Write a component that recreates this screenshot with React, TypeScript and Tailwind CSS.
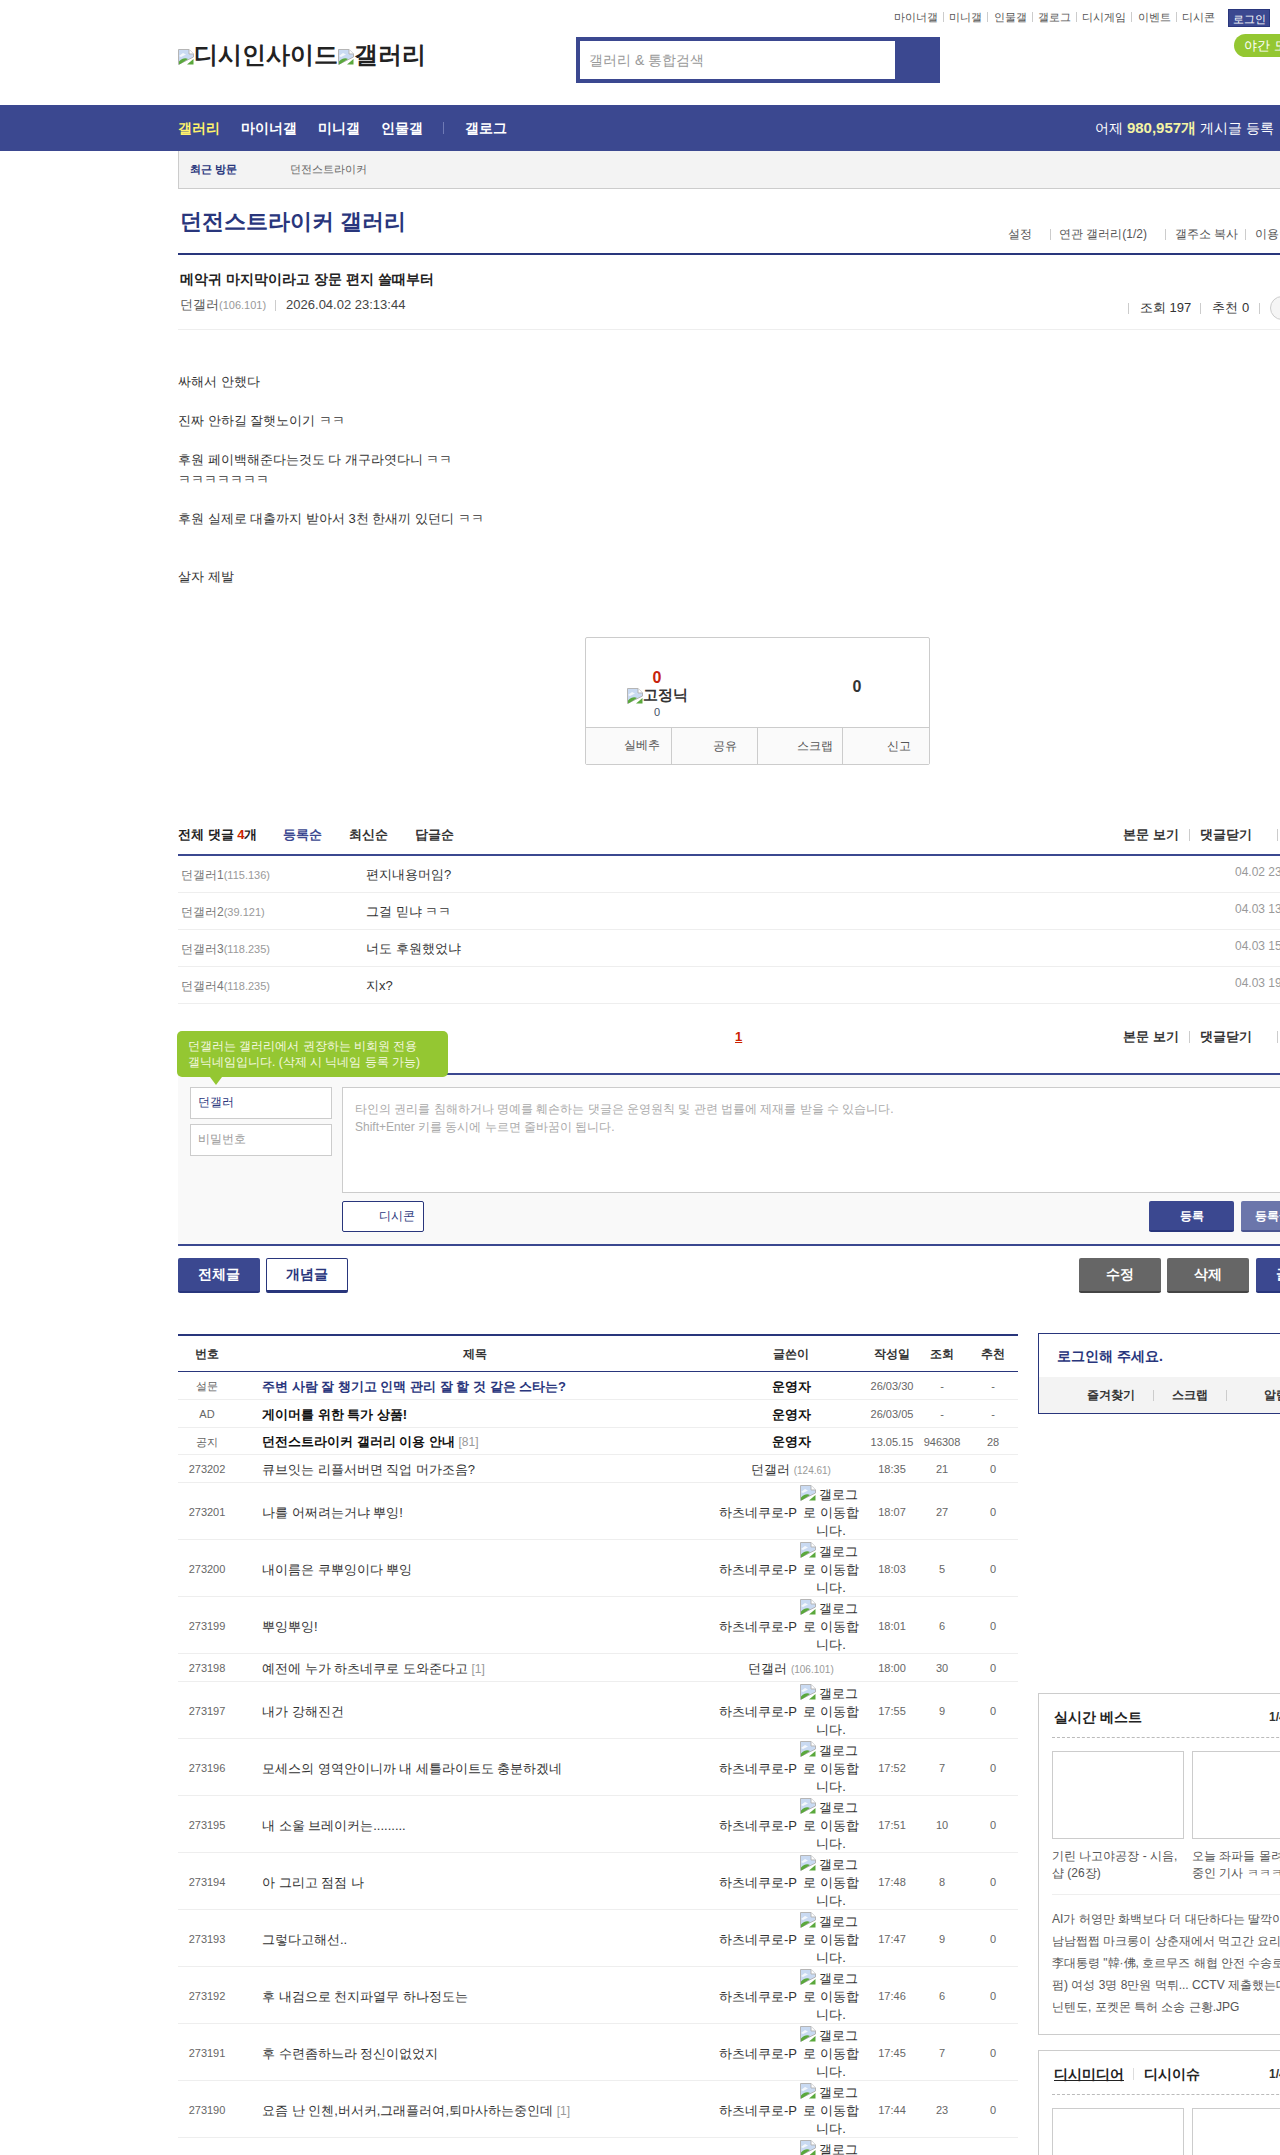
import React from "react";

function Broken() {
  return (
    <svg width="16" height="16" viewBox="0 0 16 16" className="inline-block align-[-2px] shrink-0">
      <path d="M0.5 0.5H11L15.5 5V8L0.5 15.5Z" fill="#c9daf2" stroke="#b5b5b5" />
      <path d="M11 0.5V5H15.5" fill="#fff" stroke="#b5b5b5" />
      <path d="M1 15V12.5C4 9.5 7 8.5 10 10L1.5 15.5Z" fill="#5aa83c" />
      <path d="M15.5 10V15.5H9Z" fill="#5aa83c" />
      <path d="M1 7L5 4L8 5.5L3 8Z" fill="#fff" opacity="0.8" />
    </svg>
  );
}

function Sep({ c = "bg-[#cccccc]", h = "h-[11px]" }: { c?: string; h?: string }) {
  return <i className={`block w-px ${h} ${c}`} />;
}

const topLinks = ["마이너갤", "미니갤", "인물갤", "갤로그", "디시게임", "이벤트", "디시콘"];

type Row = { n: string; t: string; r?: string; w?: string; ip?: string; d: string; v: string };
const rows: Row[] = [
  { n: "273202", t: "큐브잇는 리플서버면 직업 머가조음?", w: "던갤러", ip: "(124.61)", d: "18:35", v: "21" },
  { n: "273201", t: "나를 어쩌려는거냐 뿌잉!", d: "18:07", v: "27" },
  { n: "273200", t: "내이름은 쿠뿌잉이다 뿌잉", d: "18:03", v: "5" },
  { n: "273199", t: "뿌잉뿌잉!", d: "18:01", v: "6" },
  { n: "273198", t: "예전에 누가 하츠네쿠로 도와준다고", r: "[1]", w: "던갤러", ip: "(106.101)", d: "18:00", v: "30" },
  { n: "273197", t: "내가 강해진건", d: "17:55", v: "9" },
  { n: "273196", t: "모세스의 영역안이니까 내 세틀라이트도 충분하겠네", d: "17:52", v: "7" },
  { n: "273195", t: "내 소울 브레이커는.........", d: "17:51", v: "10" },
  { n: "273194", t: "아 그리고 점점 나", d: "17:48", v: "8" },
  { n: "273193", t: "그렇다고해선..", d: "17:47", v: "9" },
  { n: "273192", t: "후 내검으로 천지파열무 하나정도는", d: "17:46", v: "6" },
  { n: "273191", t: "후 수련좀하느라 정신이없었지", d: "17:45", v: "7" },
  { n: "273190", t: "요즘 난 인첸,버서커,그래플러여,퇴마사하는중인데", r: "[1]", d: "17:44", v: "23" },
];

const grid = "grid grid-cols-[58px_478px_154px_48px_52px_50px] items-center text-center border-b";

function Gallog() {
  return (
    <div className="inline-flex items-center justify-center text-[13px] text-[#333333]">
      <span className="whitespace-nowrap">하츠네쿠로-P</span>
      <span className="w-[64px] ml-[2px] leading-[18px] text-center">
        <Broken /> 갤로그<span className="inline-block w-[4px]" />로 이동합니다.
      </span>
    </div>
  );
}

function Notice({ n, t, c, r, d, v, rec, h }: { n: string; t: string; c: string; r?: string; d: string; v: string; rec: string; h: string }) {
  return (
    <div className={`${grid} ${h} pt-[2px] border-[#eeeeee] text-[11px] text-[#666666]`}>
      <div>{n}</div>
      <div className={`text-left pl-[26px] text-[13px] font-bold ${c}`}>
        {t} {r && <span className="text-[12px] font-normal text-[#999999]">{r}</span>}
      </div>
      <div className="text-[13px] font-bold text-[#111111]">운영자</div>
      <div>{d}</div>
      <div>{v}</div>
      <div>{rec}</div>
    </div>
  );
}

function BoxHead({ children }: { children: React.ReactNode }) {
  return (
    <div className="flex items-center h-[44px] pt-[3px] border-b border-dashed border-[#bbbbbb] pl-[1px]">
      {children}
      <span className="absolute left-[230px] text-[12px] font-bold text-[#333333]">1/4</span>
    </div>
  );
}

export default function App() {
  return (
    <div className="relative w-[1280px] h-[2155px] overflow-hidden bg-white text-[#333333] font-['Liberation_Sans',sans-serif]">
      {/* header */}
      <header className="h-[105px] pl-[178px]">
        <div className="w-[1092px] h-[27px] pt-[9px] flex justify-end items-start text-[11px] text-[#555555]">
          <div className="flex items-center h-[16px]">
            {topLinks.map((l, i) => (
              <React.Fragment key={l}>
                {i > 0 && <span className="mx-[5.2px]"><Sep h="h-[10px]" /></span>}
                <span>{l}</span>
              </React.Fragment>
            ))}
          </div>
          <span className="ml-[13px] w-[42px] h-[18px] leading-[18px] text-center bg-[#3b4890] border border-[#29367c] text-white">로그인</span>
        </div>
        <div className="flex items-start w-[1200px]">
          <div className="w-[398px] mt-[12px] text-[24px] leading-[32px] font-bold text-[#222222] whitespace-nowrap">
            <Broken />디시인사이드<Broken />갤러리
          </div>
          <div className="mt-[10px] w-[364px] h-[46px] bg-[#3b4890] pt-[4px] pl-[4px]">
            <div className="w-[315px] h-[38px] bg-white pl-[9px] leading-[38px] text-[14px] font-medium text-[#999999]">갤러리 &amp; 통합검색</div>
          </div>
          <div className="mt-[7px] ml-[294px] w-[90px] h-[23px] rounded-l-[12px] bg-[#94c732] pl-[10px] text-[13px] leading-[23px] text-white whitespace-nowrap">야간 모드</div>
        </div>
      </header>

      {/* nav */}
      <nav className="relative h-[46px] bg-[#3b4890] pl-[178px] flex items-center text-[14px] font-bold text-white whitespace-nowrap">
        <span className="text-[#fff36b]">갤러리</span>
        <span className="ml-[21px]">마이너갤</span>
        <span className="ml-[21px]">미니갤</span>
        <span className="ml-[21px]">인물갤</span>
        <span className="ml-[20px]"><Sep c="bg-[#6f7ab5]" h="h-[12px]" /></span>
        <span className="ml-[21px]">갤로그</span>
        <span className="absolute left-[1095px] font-normal">
          어제 <b className="text-[15px] text-[#f4f4a4]">980,957개</b> 게시글 등록
        </span>
      </nav>

      <div className="ml-[178px] w-[1160px]">
        {/* recent */}
        <div className="h-[38px] flex items-center bg-[#f3f3f3] border-l border-b border-[#cccccc] text-[11px]">
          <b className="ml-[11px] text-[#29367c]">최근 방문</b>
          <span className="ml-[53px] text-[#666666]">던전스트라이커</span>
        </div>

        {/* title */}
        <div className="h-[64px] flex items-start">
          <h1 className="w-[830px] pl-[2px] mt-[16px] text-[22px] leading-[34px] font-bold text-[#29367c]">던전스트라이커 갤러리</h1>
          <div className="mt-[37px] flex items-center text-[12px] leading-[16px] text-[#555555] whitespace-nowrap">
            <span>설정</span>
            <span className="ml-[18px]"><Sep /></span>
            <span className="ml-[8px]">연관 갤러리(1/2)</span>
            <span className="ml-[18px]"><Sep /></span>
            <span className="ml-[9px]">갤주소 복사</span>
            <span className="ml-[7px]"><Sep /></span>
            <span className="ml-[9px]">이용안내</span>
          </div>
        </div>

        {/* post head */}
        <div className="h-[77px] border-t-2 border-t-[#29367c] border-b border-b-[#eeeeee] pl-[2px]">
          <div className="mt-[14px] text-[14px] leading-[20px] font-bold text-[#222222]">메악귀 마지막이라고 장문 편지 쓸때부터</div>
          <div className="mt-[7px] relative flex items-center text-[13px] leading-[18px] whitespace-nowrap">
            <span className="text-[#555555]">던갤러</span>
            <span className="text-[11px] text-[#999999]">(106.101)</span>
            <span className="ml-[9px]"><Sep c="bg-[#cccccc]" /></span>
            <span className="ml-[10px] text-[#444444]">2026.04.02 23:13:44</span>
            <div className="absolute left-[948px] top-0 flex items-center">
              <Sep />
              <span className="ml-[11px]">조회 197</span>
              <span className="ml-[9px]"><Sep /></span>
              <span className="ml-[11px]">추천 0</span>
              <span className="ml-[10px]"><Sep /></span>
              <span className="ml-[10px] w-[24px] h-[24px] rounded-full border border-[#cccccc] bg-[#f5f5f5]" />
            </div>
          </div>
        </div>

        {/* body */}
        <div className="mt-[42px] h-[215px] text-[13px] leading-[19.5px] text-[#333333]">
          싸해서 안했다<br /><br />
          진짜 안하길 잘햇노이기 ㅋㅋ<br /><br />
          후원 페이백해준다는것도 다 개구라엿다니 ㅋㅋ<br />
          ㅋㅋㅋㅋㅋㅋㅋ<br /><br />
          후원 실제로 대출까지 받아서 3천 한새끼 있던디 ㅋㅋ<br /><br /><br />
          살자 제발
        </div>

        {/* recommend */}
        <div className="ml-[407px] mt-[50px] w-[345px] h-[128px] border border-[#cccccc] rounded-[2px] flex flex-col">
          <div className="h-[90px] shrink-0 flex border-b border-[#cccccc]">
            <div className="w-[142px] pt-[31px] flex flex-col items-center">
              <b className="text-[16px] leading-[18px] text-[#c7220b]">0</b>
              <b className="h-[17px] flex items-center text-[15px] text-[#333333] whitespace-nowrap"><Broken />고정닉</b>
              <span className="mt-[2px] text-[11px] leading-[12px] text-[#445066]">0</span>
            </div>
            <div className="ml-[99px] w-[60px] pt-[37px] text-center">
              <b className="text-[16px] leading-[20px] text-[#333333]">0</b>
            </div>
          </div>
          <div className="flex-1 min-h-0 overflow-hidden grid grid-cols-4 bg-[#fafafa] text-[12px] leading-[37px] text-right text-[#555555]">
            <div className="pr-[11px] border-r border-[#cccccc] leading-[35px]">실베추</div>
            <div className="pr-[20px] border-r border-[#cccccc]">공유</div>
            <div className="pr-[9px] border-r border-[#cccccc]">스크랩</div>
            <div className="pr-[18px]">신고</div>
          </div>
        </div>

        {/* comments */}
        <div className="mt-[60px] h-[29px] flex items-start text-[13px] leading-[20px] font-bold whitespace-nowrap">
          <span className="w-[105px] text-[#222222]">전체 댓글 <span className="text-[#cc2200]">4</span>개</span>
          <span className="w-[66px] text-[#3b4890]">등록순</span>
          <span className="w-[66px]">최신순</span>
          <span className="w-[708px]">답글순</span>
          <span>본문 보기</span>
          <span className="ml-[10px] mt-[4px]"><Sep h="h-[12px]" /></span>
          <span className="ml-[10px]">댓글닫기</span>
          <span className="ml-[25px] mt-[4px]"><Sep h="h-[12px]" /></span>
        </div>
        <div className="border-t-2 border-[#3b4890]">
          {[
            ["던갤러1", "(115.136)", "편지내용머임?", "04.02 23:41:09"],
            ["던갤러2", "(39.121)", "그걸 믿냐 ㅋㅋ", "04.03 13:22:10"],
            ["던갤러3", "(118.235)", "너도 후원했었냐", "04.03 15:02:33"],
            ["던갤러4", "(118.235)", "지x?", "04.03 19:10:51"],
          ].map(([a, b, c, d]) => (
            <div key={a} className="h-[37px] pt-[2px] flex items-center border-b border-[#eeeeee] whitespace-nowrap">
              <span className="w-[188px] pl-[3px] text-[12px] text-[#777777]">
                {a}<span className="text-[11px] text-[#999999]">{b}</span>
              </span>
              <span className="w-[869px] text-[13px] text-[#333333]">{c}</span>
              <span className="mt-[-6px] text-[12px] text-[#999999]">{d}</span>
            </div>
          ))}
        </div>

        {/* pagination + tooltip */}
        <div className="relative h-[69px] pt-[23px] text-[13px] leading-[20px] font-bold whitespace-nowrap">
          <div className="flex items-start">
            <span className="ml-[557px] w-[388px] text-[#cc2200] underline">1</span>
            <span>본문 보기</span>
            <span className="ml-[10px] mt-[4px]"><Sep h="h-[12px]" /></span>
            <span className="ml-[10px]">댓글닫기</span>
            <span className="ml-[25px] mt-[4px]"><Sep h="h-[12px]" /></span>
          </div>
          <div className="absolute z-10 left-[-1px] top-[27px] w-[271px] h-[46px] rounded-[5px] bg-[#94c732] pl-[11px] pt-[7px] text-[12px] leading-[16px] font-normal text-[#f4f8e0]">
            던갤러는 갤러리에서 권장하는 비회원 전용<br />
            갤닉네임입니다. (삭제 시 닉네임 등록 가능)
            <i className="absolute left-[33px] top-[46px] w-0 h-0 border-x-[6px] border-x-transparent border-t-[8px] border-t-[#94c732]" />
          </div>
        </div>

        {/* write */}
        <div className="h-[173px] flex bg-[#f9f9f9] border-y-2 border-[#3b4890] pl-[12px] pr-[12px] pt-[12px]">
          <div className="w-[142px]">
            <div className="h-[32px] pl-[7px] leading-[28px] bg-white border border-[#cccccc] text-[12px] text-[#29367c]">던갤러</div>
            <div className="mt-[5px] h-[32px] pl-[7px] leading-[29px] bg-white border border-[#cccccc] text-[12px] text-[#999999]">비밀번호</div>
          </div>
          <div className="ml-[10px] flex-1">
            <div className="h-[106px] bg-white border border-[#cccccc] px-[12px] pt-[12px] text-[12px] leading-[18px] text-[#aaaaaa]">
              타인의 권리를 침해하거나 명예를 훼손하는 댓글은 운영원칙 및 관련 법률에 제재를 받을 수 있습니다.<br />
              Shift+Enter 키를 동시에 누르면 줄바꿈이 됩니다.
            </div>
            <div className="mt-[8px] flex items-start">
              <div className="w-[82px] h-[31px] bg-white border border-[#29367c] rounded-[2px] pl-[36px] leading-[29px] text-[12px] text-[#29367c]">디시콘</div>
              <div className="ml-[725px] w-[85px] h-[31px] rounded-[2px] bg-[#3b4890] border-b-2 border-[#29367c] text-center leading-[30px] text-[12px] font-bold text-white">등록</div>
              <div className="ml-[7px] w-[85px] h-[31px] rounded-[2px] bg-[#6b76ab] border-b-2 border-[#4a5590] pl-[14px] leading-[30px] text-[12px] font-bold text-white">등록+추천</div>
            </div>
          </div>
        </div>

        {/* action buttons */}
        <div className="mt-[12px] h-[35px] flex text-[14px] font-bold text-center leading-[32px] whitespace-nowrap">
          <div className="w-[82px] rounded-[2px] bg-[#3b4890] border-b-2 border-[#29367c] text-white">전체글</div>
          <div className="ml-[6px] w-[82px] rounded-[2px] bg-white border border-b-[3px] border-[#29367c] text-[#29367c] leading-[30px]">개념글</div>
          <div className="ml-[731px] w-[82px] rounded-[2px] bg-[#666666] border-b-2 border-[#444444] text-white">수정</div>
          <div className="ml-[6px] w-[82px] rounded-[2px] bg-[#666666] border-b-2 border-[#444444] text-white">삭제</div>
          <div className="ml-[7px] w-[82px] rounded-[2px] bg-[#3b4890] border-b-2 border-[#29367c] text-white">글쓰기</div>
        </div>

        {/* list + side */}
        <div className="mt-[40px] flex items-start">
          <main className="w-[840px] mt-[1px]">
            <div className={`${grid} h-[38px] border-t-2 border-t-[#29367c] border-b-[#29367c] text-[12px] font-bold text-[#333333]`}>
              <div>번호</div>
              <div>제목</div>
              <div>글쓴이</div>
              <div>작성일</div>
              <div>조회</div>
              <div>추천</div>
            </div>
            <Notice h="h-[28px]" n="설문" t="주변 사람 잘 챙기고 인맥 관리 잘 할 것 같은 스타는?" c="text-[#29367c]" d="26/03/30" v="-" rec="-" />
            <Notice h="h-[28px]" n="AD" t="게이머를 위한 특가 상품!" c="text-[#111111]" d="26/03/05" v="-" rec="-" />
            <Notice h="h-[27px]" n="공지" t="던전스트라이커 갤러리 이용 안내" r="[81]" c="text-[#111111]" d="13.05.15" v="946308" rec="28" />
            {rows.map((r) => (
              <div key={r.n} className={`${grid} ${r.w ? "h-[28px]" : "h-[57px]"} pt-[2px] border-[#eeeeee] text-[11px] text-[#666666]`}>
                <div>{r.n}</div>
                <div className="text-left pl-[26px] text-[13px] text-[#333333]">
                  {r.t} {r.r && <span className="text-[12px] text-[#999999]">{r.r}</span>}
                </div>
                <div>
                  {r.w ? (
                    <span className="text-[13px] text-[#333333]">
                      {r.w} <span className="text-[10px] text-[#999999]">{r.ip}</span>
                    </span>
                  ) : (
                    <Gallog />
                  )}
                </div>
                <div>{r.d}</div>
                <div>{r.v}</div>
                <div>0</div>
              </div>
            ))}
            <div className={`${grid} h-[57px] pt-[2px] border-[#eeeeee]`}>
              <div />
              <div />
              <div><Gallog /></div>
            </div>
          </main>

          <aside className="ml-[20px] w-[300px]">
            <div className="h-[81px] border border-[#29367c] flex flex-col">
              <div className="h-[43px] pl-[18px] leading-[44px] text-[14px] font-bold text-[#29367c]">로그인해 주세요.</div>
              <div className="flex-1 flex items-center bg-[#f3f3f3] text-[12px] font-bold text-[#333333] whitespace-nowrap">
                <span className="ml-[48px]">즐겨찾기</span>
                <span className="ml-[18px]"><Sep /></span>
                <span className="ml-[18px]">스크랩</span>
                <span className="ml-[18px]"><Sep /></span>
                <span className="ml-[37px]">알림</span>
              </div>
            </div>

            <div className="relative mt-[279px] h-[342px] border border-[#cccccc] px-[13px] overflow-hidden">
              <BoxHead><b className="ml-[1px] text-[14px] text-[#222222]">실시간 베스트</b></BoxHead>
              <div className="mt-[13px] flex gap-[8px]">
                {[
                  <>기린 나고야공장 - 시음,<br />샵 (26장)</>,
                  <>오늘 좌파들 몰려와<br />중인 기사 ㅋㅋㅋ</>,
                ].map((c, i) => (
                  <div key={i} className="w-[132px]">
                    <div className="h-[88px] bg-white border border-[#cccccc]" />
                    <div className="mt-[9px] text-[12px] leading-[17px] text-[#555555] whitespace-nowrap">{c}</div>
                  </div>
                ))}
              </div>
              <div className="mt-[12px] pt-[13px] border-t border-[#eeeeee] text-[12px] leading-[22px] text-[#555555] whitespace-nowrap">
                <div>AI가 허영만 화백보다 더 대단하다는 딸깍이</div>
                <div>남남쩝쩝 마크롱이 상춘재에서 먹고간 요리</div>
                <div>李대통령 "韓·佛, 호르무즈 해협 안전 수송로</div>
                <div>펌) 여성 3명 8만원 먹튀... CCTV 제출했는데</div>
                <div>닌텐도, 포켓몬 특허 소송 근황.JPG</div>
              </div>
            </div>

            <div className="relative mt-[15px] h-[300px] border border-[#cccccc] px-[13px] overflow-hidden">
              <BoxHead>
                <b className="ml-[1px] text-[14px] text-[#222222] underline">디시미디어</b>
                <span className="ml-[9px]"><Sep c="bg-[#dddddd]" h="h-[12px]" /></span>
                <b className="ml-[10px] text-[14px] text-[#222222]">디시이슈</b>
              </BoxHead>
              <div className="mt-[13px] flex gap-[8px]">
                <div className="w-[132px] h-[88px] border border-[#cccccc]" />
                <div className="w-[132px] h-[88px] border border-[#cccccc]" />
              </div>
            </div>
          </aside>
        </div>
      </div>
    </div>
  );
}
